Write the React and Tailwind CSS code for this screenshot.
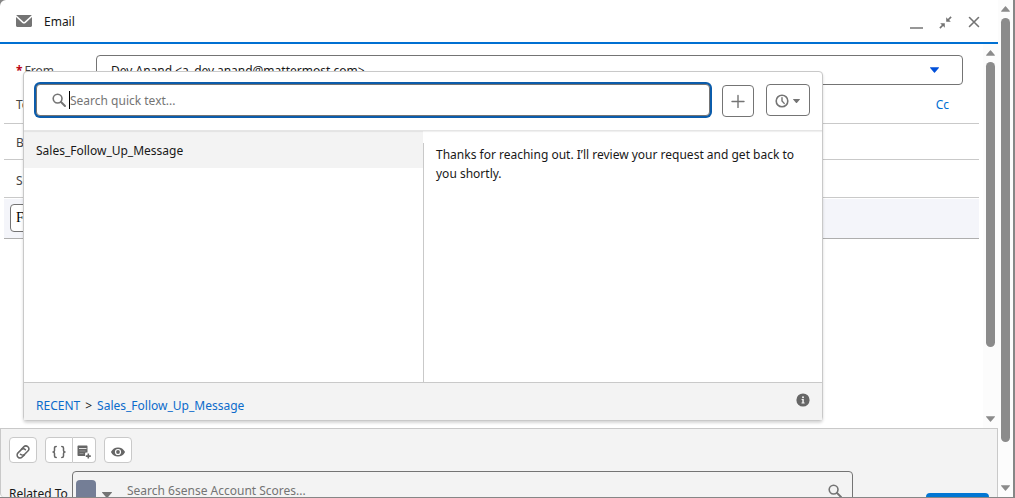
import React, { useState } from 'react'

const QUICK_TEXTS = [
  {
    name: 'Sales_Follow_Up_Message',
    body: 'Thanks for reaching out. I’ll review your request and get back to you shortly.',
  },
]

function MailIcon() {
  return (
    <svg width="16" height="12" viewBox="0 0 16 12" fill="#747474" aria-hidden="true">
      <path d="M.8 0h14.4c.3 0 .4.3.2.5L8.6 6.7c-.4.3-.8.3-1.2 0L.6.5C.4.3.5 0 .8 0z" />
      <path d="M0 2v8.6C0 11.4.5 12 1.3 12h13.4c.8 0 1.3-.6 1.3-1.4V2L9.6 7.9c-.9.9-2.3.9-3.2 0z" />
    </svg>
  )
}

function MinimizeIcon() {
  return (
    <svg width="13" height="14" viewBox="0 0 13 14" aria-hidden="true">
      <path d="M0.5 13h12" stroke="#747474" strokeWidth="1.6" strokeLinecap="round" />
    </svg>
  )
}

function ContractIcon() {
  return (
    <svg width="13" height="13" viewBox="0 0 13 13" fill="#747474" aria-hidden="true">
      <path d="M7.2 1.2v4.6h4.6l-1.7-1.7L12.7 1.5 11.5.3 8.9 2.9z" />
      <path d="M5.8 11.8V7.2H1.2l1.7 1.7L.3 11.5l1.2 1.2 2.6-2.6z" />
    </svg>
  )
}

function CloseIcon() {
  return (
    <svg width="12" height="12" viewBox="0 0 12 12" aria-hidden="true">
      <path d="M1.5 1.5l9 9M10.5 1.5l-9 9" stroke="#747474" strokeWidth="1.6" strokeLinecap="round" />
    </svg>
  )
}

function SearchIcon() {
  return (
    <svg width="14" height="14" viewBox="0 0 14 14" fill="none" stroke="#747474" aria-hidden="true">
      <circle cx="5.6" cy="5.6" r="4.4" strokeWidth="1.6" />
      <path d="M9 9l4 4" strokeWidth="1.9" strokeLinecap="round" />
    </svg>
  )
}

function PlusIcon() {
  return (
    <svg width="14" height="14" viewBox="0 0 14 14" aria-hidden="true">
      <path d="M7 1.500v12M1 7.500h12" stroke="#747474" strokeWidth="1.400" strokeLinecap="round" />
    </svg>
  )
}

function ClockIcon() {
  return (
    <svg width="14" height="14" viewBox="0 0 14 14" fill="none" stroke="#747474" aria-hidden="true">
      <circle cx="7" cy="7" r="5.8" strokeWidth="1.6" />
      <path d="M7 3.6V7l2.2 2.4" strokeWidth="1.4" strokeLinecap="round" />
    </svg>
  )
}

function Caret({ className }) {
  return (
    <svg width="10" height="6" viewBox="0 0 10 6" className={className} aria-hidden="true">
      <path d="M0.5 0h9c.4 0 .6.4.3.7L5.5 5.7c-.3.3-.7.3-1 0L.2.7C-.1.4.1 0 .5 0z" fill="currentColor" />
    </svg>
  )
}

function InfoIcon() {
  return (
    <svg width="14" height="14" viewBox="0 0 14 14" aria-hidden="true">
      <circle cx="7" cy="7" r="6.6" fill="#666" />
      <circle cx="7" cy="4.2" r="1" fill="#f3f3f3" />
      <path d="M5.6 6h2.2v3.4h.8v1H5.5v-1h.8V7h-.7z" fill="#f3f3f3" />
    </svg>
  )
}

function AttachIcon() {
  return (
    <svg width="14" height="14" viewBox="0 0 14 14" fill="none" stroke="#666" strokeWidth="1.5" strokeLinecap="round" aria-hidden="true">
      <path d="M5.4 4.2L7.700 1.900c1.200-1.200 3-1.200 4.200-.1 1.200 1.200 1.200 3 0 4.200L8.700 9.200c-1.200 1.200-3 1.200-4.200 0" />
      <path d="M8.400 9.900L6.200 12c-1.200 1.200-3 1.200-4.200.1-1.200-1.200-1.200-3 0-4.200l3.300-3.300c1.200-1.100 3-1.100 4.100.1" />
    </svg>
  )
}

function BracesIcon() {
  return (
    <svg width="14" height="14" viewBox="0 0 14 14" fill="none" stroke="#666" strokeWidth="1.5" strokeLinecap="round" strokeLinejoin="round" aria-hidden="true">
      <path d="M4.200 1.500c-1.300 0-1.700.5-1.700 1.500v2.500c0 1-.4 1.500-1.500 1.500 1.100 0 1.500.5 1.500 1.500V11c0 1 .4 1.500 1.700 1.500" />
      <path d="M9.800 1.500c1.300 0 1.700.5 1.700 1.500v2.500c0 1 .4 1.500 1.500 1.500-1.100 0-1.500.5-1.500 1.500V11c0 1-.4 1.500-1.700 1.500" />
    </svg>
  )
}

function QuickTextIcon() {
  return (
    <svg width="14" height="14" viewBox="0 0 14 14" aria-hidden="true">
      <path d="M1.500.5h8c.6 0 1 .4 1 1v6H9c-.6 0-.9.3-.9.9V11H1.500c-.6 0-1-.4-1-1V1.500c0-.6.4-1 1-1z" fill="#666" />
      <path d="M2 3.500h7.500" stroke="#f3f3f3" strokeWidth="0.900" />
      <path d="M2.500 6h6M2.500 8.500h4" stroke="#b0b0b0" strokeWidth="0.600" />
      <path d="M11.300 8.600v5M8.800 11.100h5" stroke="#666" strokeWidth="1.600" />
    </svg>
  )
}

function EyeIcon() {
  return (
    <svg width="14" height="10" viewBox="0 0 14 10" aria-hidden="true">
      <path d="M13.800 4.500C12.500 2 10 .4 7 .4S1.500 2 .2 4.500a1 1 0 0 0 0 1C1.500 8 4 9.600 7 9.600s5.500-1.600 6.800-4.100a1 1 0 0 0 0-1z" fill="#666" />
      <circle cx="7" cy="5" r="3.100" fill="#fff" />
      <circle cx="7" cy="5" r="1.900" fill="#666" />
    </svg>
  )
}

/* Narrow scrollbar with an arrow at each end */
function ScrollRail({ thumb }) {
  return (
    <div className="flex w-[15px] shrink-0 flex-col items-center bg-[#fcfcfc] py-1.5" aria-hidden="true">
      <Caret className="w-[9px] shrink-0 rotate-180 text-[#8b8b8b]" />
      <div className="min-h-0 w-[9px] flex-1 py-1.5">
        <div className={`w-full rounded-full bg-[#8b8b8b] ${thumb}`}></div>
      </div>
      <Caret className="w-[9px] shrink-0 text-[#8b8b8b]" />
    </div>
  )
}

function ComposerHeader() {
  return (
    <header className="flex h-11 shrink-0 items-center border-b-2 border-[#0070d2] px-4">
      <MailIcon />
      <h1 className="ml-3 flex-1 pt-0.5 text-xs text-[#181818]">Email</h1>
      <div className="flex items-center gap-4 pr-0.5 pt-0.5">
        <button type="button" aria-label="Minimize"><MinimizeIcon /></button>
        <button type="button" aria-label="Shrink"><ContractIcon /></button>
        <button type="button" aria-label="Close"><CloseIcon /></button>
      </div>
    </header>
  )
}

function EmailForm() {
  return (
    <form className="min-w-0 flex-1 pl-1 pr-1 text-xs text-[#444]">
      <div className="flex h-[41px] items-end pl-3 pr-4">
        <label htmlFor="from" className="flex h-[30px] w-20 items-center pt-0.5">
          <span className="mr-0.5 font-bold text-[#ba0517]">*</span>From
        </label>
        <div className="relative flex-1">
          <select id="from" className="h-[30px] w-full appearance-none rounded border border-[#747474] bg-white px-3.5 pt-0.5 text-[#181818]">
            <option>Dev Anand &lt;a_dev.anand@mattermost.com&gt;</option>
          </select>
          <Caret className="pointer-events-none absolute right-6 top-3 w-[9px] text-[#0250d9]" />
        </div>
      </div>
      <div className="flex h-[39px] items-center border-b border-[#c9c9c9] pl-3 pr-[30px] pt-0.5">
        <label htmlFor="to">To</label>
        <input id="to" type="text" className="min-w-0 flex-1 outline-none" />
        <a href="#cc" className="text-[#0070d2]">Cc</a>
      </div>
      <div className="flex h-9 items-center border-b border-[#c9c9c9] pl-3 pt-0.5">
        <label htmlFor="bcc">Bcc</label>
        <input id="bcc" type="text" className="min-w-0 flex-1 outline-none" />
      </div>
      <div className="flex h-[38px] items-center border-b border-[#c9c9c9] pl-3 pt-1">
        <label htmlFor="subject">Subject</label>
        <input id="subject" type="text" className="min-w-0 flex-1 outline-none" />
      </div>
      <div className="mt-px flex h-10 items-center border-b border-[#aeaeae] bg-[#f4f5fa] px-1.5 pb-0.5">
        <select aria-label="Font" className="h-7 w-24 appearance-none rounded border border-[#747474] bg-white px-[5px] font-['Liberation_Serif',serif] text-sm text-black">
          <option>Font</option>
        </select>
      </div>
    </form>
  )
}

function QuickTextPanel() {
  const [selected, setSelected] = useState(QUICK_TEXTS[0])

  return (
    <section
      aria-label="Quick text"
      className="absolute bottom-[7px] left-[23px] right-[175px] top-[27px] flex flex-col rounded border border-[#c9c9c9] bg-white text-xs shadow-[0_2px_3px_rgba(0,0,0,0.16)]"
    >
      <div className="z-10 flex h-[59px] shrink-0 items-start border-b border-[#e5e5e5] px-3 pt-3 shadow-[0_1px_1px_rgba(0,0,0,0.06)]">
        <label className="flex h-8 flex-1 items-center rounded border border-[#747474] bg-white pl-[15px] ring-2 ring-[#0b5cab]">
          <SearchIcon />
          <span className="ml-[3px] h-[18px] w-px bg-black"></span>
          <input
            type="search"
            aria-label="Search quick text"
            placeholder="Search quick text..."
            className="min-w-0 flex-1 pt-0.5 outline-none placeholder:text-[#747474]"
          />
        </label>
        <button type="button" aria-label="New quick text" className="ml-3 mt-px flex h-8 w-8 items-center justify-center rounded border border-[#747474]">
          <PlusIcon />
        </button>
        <button type="button" aria-label="Recent" className="ml-3 flex h-8 w-11 items-center justify-center gap-1 rounded border border-[#747474] pr-0.5 pt-0.5 text-[#747474]">
          <ClockIcon />
          <Caret className="w-[7px]" />
        </button>
      </div>

      <div className="flex min-h-0 flex-1">
        <ul className="w-1/2">
          {QUICK_TEXTS.map((item) => (
            <li key={item.name}>
              <button
                type="button"
                onClick={() => setSelected(item)}
                className="h-[37px] w-full bg-[#f3f3f3] px-3 pt-0.5 text-left text-[#181818]"
              >
                {item.name}
              </button>
            </li>
          ))}
        </ul>
        <div className="flex w-1/2 pt-3">
          <p className="flex-1 border-l border-[#c9c9c9] px-3 pt-0.5 leading-[19px] text-[#181818]">
            {selected.body}
          </p>
        </div>
      </div>

      <div className="flex h-[38px] shrink-0 items-start border-t border-[#c9c9c9] bg-[#f3f3f3] px-3">
        <nav className="flex-1 pt-[15px] text-[#181818]" aria-label="Quick text path">
          <a href="#recent" className="text-[#0b6bcb]">RECENT</a>
          <span className="mx-[5px]">&gt;</span>
          <a href="#message" className="text-[#0b6bcb]">{selected.name}</a>
        </nav>
        <button type="button" aria-label="Info" className="pt-2.5"><InfoIcon /></button>
      </div>
    </section>
  )
}

function ComposerFooter() {
  const toolClass = 'flex h-[26px] items-center justify-center border border-[#c9c9c9] bg-white pt-1'

  return (
    <footer className="h-[69px] shrink-0 overflow-hidden rounded-bl border border-b-0 border-[#c9c9c9] bg-[#f3f3f3] px-2 pt-2">
      <div className="flex">
        <button type="button" aria-label="Attach file" className={`${toolClass} w-7 rounded-sm`}><AttachIcon /></button>
        <button type="button" aria-label="Insert merge field" className={`${toolClass} ml-2 w-7 rounded-l-sm`}><BracesIcon /></button>
        <button type="button" aria-label="Insert quick text" className={`${toolClass} w-[23px] rounded-r-sm border-l-0`}><QuickTextIcon /></button>
        <button type="button" aria-label="Preview" className={`${toolClass} ml-2 w-7 rounded-sm`}><EyeIcon /></button>
      </div>
      <div className="mt-2 flex text-xs text-[#181818]">
        <label htmlFor="related" className="w-[63px] shrink-0 whitespace-nowrap pt-[15px] leading-4">Related To</label>
        <div className="flex h-10 flex-1 items-center rounded border border-[#747474] px-[3px]">
          <button type="button" aria-label="Object type" className="flex items-center gap-1.5 text-[#747474]">
            <span className="h-[22px] w-5 rounded-sm bg-[#747e96]"></span>
            <Caret className="mt-2" />
          </button>
          <input
            id="related"
            type="search"
            placeholder="Search 6sense Account Scores..."
            className="ml-[15px] min-w-0 flex-1 outline-none placeholder:text-[#747474]"
          />
          <span className="mr-[7px]"><SearchIcon /></span>
        </div>
        <button type="button" aria-label="Send" className="ml-[73px] mt-[22px] h-8 w-[63px] shrink-0 rounded bg-[#0176d3]"></button>
      </div>
    </footer>
  )
}

export default function App() {
  return (
    <div className="flex h-screen overflow-hidden bg-[#868686] pb-px font-['Noto_Sans',sans-serif]">
      <main className="flex min-w-0 flex-1 flex-col rounded-tl-md bg-white">
        <ComposerHeader />
        <div className="relative flex min-h-0 flex-1">
          <EmailForm />
          <ScrollRail thumb="h-[82%]" />
          <QuickTextPanel />
        </div>
        <ComposerFooter />
      </main>
      <ScrollRail thumb="h-[92%]" />
      <div className="w-0.5 shrink-0"></div>
    </div>
  )
}
